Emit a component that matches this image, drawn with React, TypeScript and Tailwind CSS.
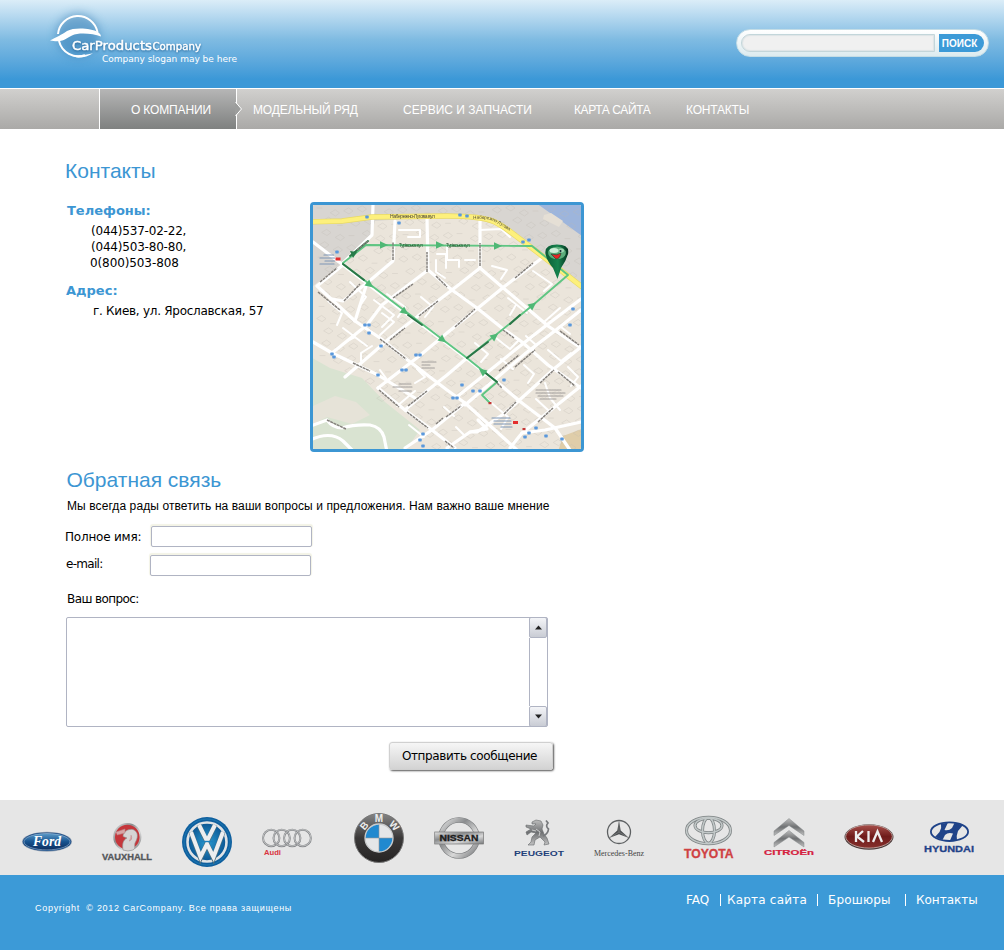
import React from "react";

const sans = "font-['Liberation_Sans',Arial,sans-serif]";
const wide = "font-['DejaVu_Sans',Verdana,sans-serif]";

function BrandMark() {
  return (
    <svg width="200" height="72" viewBox="44 4 200 72" className="ml-[44px] mt-1 overflow-visible">
      <defs>
        <filter id="soft" x="-50%" y="-50%" width="200%" height="200%">
          <feGaussianBlur stdDeviation="5" />
        </filter>
      </defs>
      <circle cx="78" cy="35" r="22" fill="#2d78b0" opacity=".5" filter="url(#soft)" />
      <path d="M58 34A20 20 0 0 1 97.500 32" fill="none" stroke="#fff" strokeWidth="2" />
      <path d="M59 41A20 20 0 0 0 85 55.200" fill="none" stroke="#fff" strokeWidth="2" />
      <path d="M76 55.200Q85 55.500 93 53.200Q86 58 76 57.300Z" fill="#fff" />
      <path d="M50 40.500C57 37 61 35 67 31C74 27 91 28 98 32C100 33.500 101 35 101 36.500C93 33.500 79 32 72 35.500C65 39 62 43 50 40.500Z" fill="#fff" />
      <g fontFamily="'DejaVu Sans', Verdana, sans-serif" fill="#fff">
        <g stroke="#fff" strokeWidth=".45" style={{ filter: "drop-shadow(0 1px 1px #2a6a9c)" }}>
          <text x="72" y="49.500" fontSize="12.500" textLength="80" lengthAdjust="spacingAndGlyphs">CarProducts</text>
          <text x="152.500" y="49.500" fontSize="11" textLength="48.500" lengthAdjust="spacingAndGlyphs">Company</text>
        </g>
        <text x="102" y="62" fontSize="9" textLength="135">Company slogan may be here</text>
      </g>
    </svg>
  );
}

function SearchBox() {
  return (
    <form className="mt-[29px] mr-[15px] flex h-[28px] w-[253px] gap-1 rounded-full border border-[#c4dde6] bg-gradient-to-b from-white to-[#dcebef] p-1" onSubmit={(e) => e.preventDefault()}>
      <input aria-label="ПОИСК" className="h-[18px] w-[195px] rounded-l-full border-[1.5px] border-[#c3d6da] bg-[#f0f0f0] px-2 text-xs shadow-[inset_0_0_1px_1px_#dde4e6] outline-none" />
      <button className={`${sans} h-[18px] w-[45px] rounded-r-full bg-[#3c9ad7] pr-[4px] text-center text-[10px] leading-[17px] font-bold text-white`}>ПОИСК</button>
    </form>
  );
}

function Nav() {
  return (
    <nav className={`${sans} flex h-[41px] border-t border-white bg-gradient-to-b from-[#d1d0ce] to-[#aaa9a7] text-[12px] leading-[42px] whitespace-nowrap text-white`}>
      <a className="relative ml-[99px] block h-10 w-[138px] border-x border-white bg-gradient-to-b from-[#b6b6b6] to-[#7f8180] pl-[31px] tracking-[-0.15px]">
        О КОМПАНИИ
        <svg width="8" height="14" viewBox="0 0 8 14" className="absolute top-[13px] -right-[7px]">
          <path d="M0 0L6.500 7L0 14Z" fill="#9c9d9c" />
          <path d="M.5 0L6.500 7L.5 14" fill="none" stroke="#fff" />
        </svg>
      </a>
      <a className="ml-[16px] w-[150px] tracking-[-0.15px]">МОДЕЛЬНЫЙ РЯД</a>
      <a className="w-[171px]">СЕРВИС И ЗАПЧАСТИ</a>
      <a className="w-[112px] tracking-[-0.4px]">КАРТА САЙТА</a>
      <a className="tracking-[-0.2px]">КОНТАКТЫ</a>
    </nav>
  );
}

const roads = [
  "M343 265L408 315L445 342L497 382L522 403L555 428L570 450",
  "M313 242L343 265L317 286L355 321L380 338L405 358L447 390L465 403L517 450",
  "M373 205L372 235L343 263",
  "M313 342L332 353L378 375L415 398",
  "M332 353L367 325L382 305L428 270",
  "M355 321L367 283L393 261L395 221",
  "M367 283L343 301L332 299",
  "M427 218L428 270L452 290L477 308L502 328L522 342L548 365L581 388",
  "M480 221L480 268L452 290L418 316L390 338L345 377",
  "M480 268L548 326L581 348",
  "M542 258L505 286L478 308L447 333L418 357L378 388",
  "M378 388L405 410L432 430L455 448",
  "M405 410L428 390L447 375L467 358",
  "M458 396L520 346L548 324L581 299",
  "M465 405L526 353L556 330L581 310",
  "M581 347L555 368L505 413L477 432L470 432",
  "M581 386L522 433L510 448",
  "M405 448L432 430L465 403",
  "M581 422L545 430L522 433",
  "M447 448L470 432L487 429L478 420",
];

const lanes = [
  "M399 230H420V237H408", "M447 246V260H459V267", "M465 260H475", "M480 230L501 229L510 237", "M492 266L507 270L501 279",
  "M374 300L394 315L382 327", "M387 294L405 307L398 317", "M328 301L342 313L337 325", "M352 335L367 346", "M343 328L355 337L347 341",
  "M361 361V353L372 346", "M508 298L527 313", "M516 305L510 315", "M533 271L552 284L544 291", "M544 322L560 308", "M421 297L433 307L425 317",
  "M436 260V272L445 278", "M437 254H446V268", "M496 338L510 349L518 341", "M475 343L488 354L481 362", "M548 350L561 361L571 353",
  "M524 365L534 374L528 383", "M545 383L550 398L560 410", "M482 395L508 417L501 429", "M415 383L425 377L417 369", "M380 370L388 381",
  "M433 332L443 340", "M397 406L415 391", "M501 359L513 369", "M561 327L570 334", "M526 336L536 345L532 351", "M568 367L578 377L571 386",
  "M380 335L394 322L382 313", "M350 282L366 297L359 307", "M536 399L548 410", "M456 427L465 436", "M444 407L454 416", "M409 425L424 437",
];

const streetNames = [
  "M357 250L368 241", "M320 282L337 268", "M318 292L340 310", "M344 301L360 284", "M393 260V242", "M427 272V252", "M480 266V243",
  "M393 298L413 284", "M436 276L447 287", "M419 316L438 301", "M515 278L533 263", "M455 327L475 309", "M380 339L406 359", "M390 340L405 328",
  "M353 363L370 371", "M379 390L399 407", "M408 406L427 391", "M407 412L428 428", "M327 420L346 429", "M499 371L519 355", "M515 367L535 350",
  "M503 330L514 338", "M560 331L579 345", "M540 383L554 370", "M558 372L575 386", "M504 414L516 402", "M538 422L553 408", "M446 417L461 406", "M436 424L443 418", "M445 441L454 448", "M497 383L502 388",
];

const stops = [
  [367, 217], [399, 223], [460, 215], [467, 216], [523, 242], [529, 240], [337, 252], [369, 333], [332, 354], [334, 357], [378, 375],
  [416, 355], [420, 355], [402, 370], [406, 370], [462, 385], [480, 391], [504, 380], [473, 391], [457, 398], [453, 398], [573, 309], [570, 325],
  [423, 434], [420, 440], [423, 446], [525, 437], [536, 428], [529, 433], [546, 436], [562, 439], [365, 325], [369, 325], [381, 346],
];

const arrows = [
  [384, 245, 0], [440, 245, 0], [498, 246, 0], [370, 285, 38], [405, 312, 38], [443, 340, 38], [482, 371, -142], [533, 305, -38], [495, 336, -38],
];

function LocationMap() {
  const blocks: React.ReactNode[] = [];
  for (let row = 0; row < 20; row++) {
    for (let col = 0; col < 20; col++) {
      const x = 317 + col * 13.5 + ((row * 7) % 9);
      const y = 208 + row * 12.3 + ((col * 5) % 7);
      const inPark = x < 420 && y > 352 + (x - 313) * 0.75;
      if (!inPark) blocks.push(<path key={`${row}-${col}`} d={(row * 3 + col) % 4 === 0 ? `M${x} ${y}h5` : `M${x} ${y}l5 3l4 -3l-4 -3z`} />);
    }
  }
  return (
    <div className="h-[250px] w-[274px] overflow-hidden rounded-[4px] border-[3px] border-[#3c96d3]">
      <svg width="268" height="244" viewBox="313 205 268 244">
        <defs>
          <filter id="mapSoft"><feGaussianBlur stdDeviation=".5" /></filter>
          <linearGradient id="pin" x1="0" x2="1"><stop stopColor="#0b5a35" /><stop offset=".55" stopColor="#16834e" /><stop offset="1" stopColor="#04331f" /></linearGradient>
        </defs>
        <g filter="url(#mapSoft)" fill="none" strokeLinejoin="round" strokeLinecap="round">
          <rect x="305" y="200" width="284" height="254" fill="#ebe5db" />
          <path d="M305 198H590V290L545 258L495 222L447 216L375 221L371 236L343 263L313 286H305Z" fill="#d8d5d1" />
          <path d="M529 198H590V242L560 220Z" fill="#9db5dc" />
          <path d="M305 354L330 368L362 378L385 402L420 430L402 455H305Z" fill="#d9e3d1" />
          <path d="M313 406L335 396L356 402L370 415L352 424L327 417L313 424Z" fill="#e6e3d8" />
          <path d="M563 436L590 426V455H557Z" fill="#dfcda9" />
          <g fill="none" stroke="#bdb8b0" strokeWidth=".7" opacity=".4">{blocks}</g>
          <path d="M544 215l7-2l12 8l-4 6l-16-8z" fill="#e5dfd5" />
          <g stroke="#fff" strokeWidth="2">{lanes.map((d, i) => <path key={i} d={d} />)}</g>
          <g stroke="#fff" strokeWidth="3.200">{roads.map((d, i) => <path key={i} d={d} />)}</g>
          <path d="M308 427L327 420Q333 428 342 428Q355 424 370 425Q381 427 384 437L387 452M308 441Q330 430 343 441L354 452" stroke="#fff" strokeWidth="3.200" />
          <path d="M305 222L342 221L372 217L447 216Q482 216 495 222Q503 226 512 233L545 258L590 293" stroke="#e9da64" strokeWidth="5.400" />
          <path d="M305 222L342 221L372 217L447 216Q482 216 495 222Q503 226 512 233L545 258L590 293" stroke="#fdf07c" strokeWidth="4.200" />
          <g stroke="#5ec582" strokeWidth="1.900">
            <path d="M343 263L366 245L532 246L568 275L533 305L467 358" />
            <path d="M343 264L467 358L497 382L482 395L490 403" />
          </g>
          <path d="M350 256L368 241M343 264L364 280M408 315L422 325M467 358L488 342M510 324L520 315M483 371L497 382" stroke="#2b7547" strokeWidth="1.900" />
          <path d="M350 251l7 1l-4 6z" fill="#267c48" />
          {arrows.map(([x, y, angle]) => <path key={`${x}-${y}`} d="M-4 -3.800L4 0L-4 3.800Z" fill="#4fb875" transform={`translate(${x} ${y}) rotate(${angle})`} />)}
          <path d={streetNames.join("")} stroke="#85817c" strokeWidth="1.500" strokeDasharray="3 .6" strokeLinecap="butt" />
          {stops.map(([x, y], i) => <rect key={i} x={x - 1.7} y={y - 1.4} width="3.400" height="2.800" rx=".6" fill="#5a98dc" />)}
          {[[338, 259], [515.500, 422.500]].map(([x, y]) => <rect key={x} x={x - 2.500} y={y - 1.500} width="5" height="3" fill="#e32d2d" />)}
          {[[490, 403], [524, 429]].map(([x, y]) => <rect key={x} x={x - 1.500} y={y - 1} width="3" height="2.200" fill="#c43836" />)}
          <g fontFamily="'Liberation Sans', Arial, sans-serif" fontSize="5" fill="#4b4638">
            <path id="embankment" fill="none" d="M473 219Q488 218 495 222Q503 226 514 234" />
            <text x="390" y="218" textLength="45">Набережно-Лугова вул</text>
            <text fontSize="4.500"><textPath href="#embankment">Набережно-Лугова</textPath></text>
            <text x="399" y="247" fontSize="4.500" textLength="24" fill="#24532d">Турівська вул</text>
            <text x="446" y="247" fontSize="4.500" textLength="24" fill="#24532d">Турівська вул</text>
          </g>
          <path d="M324 255H334M320 258H335M325 261H335M320 264H334M492 418H510M494 421H511M494 424H511M501 427H512" stroke="#7d95b5" strokeWidth="1.200" strokeDasharray="2 .5" />
          <path d="M422 362H436M422 365H430M422 368H435M399 384H411M393 387H412M399 391H412M536 390H561M536 393H565M538 396H563M540 399H556" stroke="#a19e9b" strokeWidth="1.100" strokeDasharray="2 .6" />
        </g>
        <path d="M545.500 254Q544 244.500 557 244.500Q570 244.500 568 254Q566 261 561 268L557.500 279L553 268Q547 261 545.500 254Z" fill="url(#pin)" />
        <ellipse cx="557" cy="253" rx="8.800" ry="6.200" fill="#5cad7b" />
        <ellipse cx="554" cy="250.500" rx="4.500" ry="2.500" fill="#cdeed8" />
        <ellipse cx="561" cy="250.500" rx="3" ry="2" fill="#9fd6b2" />
        <circle cx="560.500" cy="251" r="1" fill="#123" />
        <path d="M551 254Q557 256 561 253Q560 259 556 259Z" fill="#e52625" stroke="#143" strokeWidth=".6" />
      </svg>
    </div>
  );
}

function ContactBlock() {
  return (
    <section className="mt-[21px] flex h-[250px]">
      <div className={`${wide} w-[245px] text-[12px] leading-4 whitespace-nowrap text-black`}>
        <h3 className="pl-[2px] text-[13px] leading-[17px] font-bold text-[#3c96d3]">Телефоны:</h3>
        <div className="mt-1 pl-[26px] tracking-[-0.2px]">
          <p>(044)537-02-22,</p>
          <p>(044)503-80-80,</p>
          <p className="-ml-px tracking-[-0.1px]">0(800)503-808</p>
        </div>
        <h3 className="mt-[11px] pl-[1px] text-[13px] leading-[17px] font-bold text-[#3c96d3]">Адрес:</h3>
        <p className="mt-1 pl-[28px] tracking-[-0.27px]">г. Киев, ул. Ярославская, 57</p>
      </div>
      <LocationMap />
    </section>
  );
}

function ScrollButton({ down = false }: { down?: boolean }) {
  return (
    <button type="button" aria-label={down ? "▼" : "▲"} className="flex h-[21px] w-[18px] items-center justify-center rounded-[2px] border border-[#b0b4c3] bg-gradient-to-b from-[#f4f5f8] to-[#c9ccd4]">
      <svg width="7" height="5" viewBox="0 0 7 5"><path d={down ? "M0 .5H7L3.500 4.500Z" : "M0 4.500H7L3.500 .5Z"} fill="#222" /></svg>
    </button>
  );
}

const field = "h-[21px] w-[161px] rounded-[2px] border border-[#b0b4c3] bg-white px-1 text-xs shadow-[0_-1px_1px_1px_#f3f3e6] outline-none";

function FeedbackForm() {
  return (
    <form className={`${wide} text-[12px] whitespace-nowrap text-black`} onSubmit={(e) => e.preventDefault()}>
      <h2 className={`${sans} mt-[18px] pl-[1.5px] text-[21px] leading-5 text-[#3c96d3]`}>Обратная связь</h2>
      <p className={`${sans} mt-2 pl-[2px] text-[12px] leading-4 tracking-[0.09px]`}>Мы всегда рады ответить на ваши вопросы и предложения. Нам важно ваше мнение</p>
      <label className="mt-[12px] flex h-[21px] leading-[22px]">
        <span className="w-[86px] tracking-[-0.2px]">Полное имя:</span>
        <input className={field} />
      </label>
      <label className="mt-[8px] flex h-[21px] leading-[18px]">
        <span className="w-[85px] pl-px tracking-[-0.7px]">e-mail:</span>
        <input className={field} />
      </label>
      <p className="mt-[15px] pl-[2px] leading-4 tracking-[-0.6px]">Ваш вопрос:</p>
      <div className="mt-[10px] ml-px flex h-[110px] w-[482px] rounded-[2px] border border-[#b0b4c3] bg-white">
        <textarea aria-label="Ваш вопрос:" className="h-[108px] flex-1 resize-none overflow-hidden p-1 outline-none" />
        <div className="-my-px -mr-px flex h-[110px] w-[19px] flex-col justify-between">
          <ScrollButton />
          <div className="w-[19px] flex-1 border-x border-[#b0b4c3]" />
          <ScrollButton down />
        </div>
      </div>
      <button className="mt-[15px] ml-[324px] h-[28px] w-[164px] rounded-[3px] border border-[#d0d0d0] bg-gradient-to-b from-[#f6f6f6] to-[#d3d3d3] pr-[3px] text-center leading-[26px] tracking-[-0.38px] shadow-[1px_1px_2px_#555]">Отправить сообщение</button>
    </form>
  );
}

function Logo({ children }: { children: React.ReactNode }) {
  return (
    <svg width="50" height="75" viewBox="0 0 50 75" className="overflow-visible" fontFamily="'Liberation Sans', Arial, sans-serif">
      {children}
    </svg>
  );
}

function BrandStrip() {
  return (
    <section className="flex h-[75px] bg-[#e6e6e6] pl-[22px]">
      <svg width="0" height="0" className="absolute">
        <defs>
          <linearGradient id="steel" x1="0" y1="0" x2="1" y2="1"><stop stopColor="#e4e4e4" /><stop offset=".35" stopColor="#8a8c8e" /><stop offset=".65" stopColor="#d8d8d8" /><stop offset="1" stopColor="#77797b" /></linearGradient>
          <linearGradient id="steelDown" x2="0" y2="1"><stop stopColor="#bdbdbd" /><stop offset=".5" stopColor="#6f7173" /><stop offset="1" stopColor="#c2c2c2" /></linearGradient>
          <linearGradient id="fordBlue" x2="0" y2="1"><stop stopColor="#5b9bc9" /><stop offset=".5" stopColor="#17538f" /><stop offset="1" stopColor="#0c2d5e" /></linearGradient>
          <radialGradient id="vwBlue"><stop stopColor="#2a9ad0" /><stop offset="1" stopColor="#0b5592" /></radialGradient>
          <linearGradient id="bmwBlack" x2="0" y2="1"><stop stopColor="#858585" /><stop offset=".5" stopColor="#3a3838" /><stop offset="1" stopColor="#262424" /></linearGradient>
          <linearGradient id="kiaRed" x2="0" y2="1"><stop stopColor="#a8504b" /><stop offset=".5" stopColor="#6f1b1a" /><stop offset="1" stopColor="#86302c" /></linearGradient>
        </defs>
      </svg>
      <div className="flex gap-[30px]">
        <Logo>
          <ellipse cx="25" cy="41.700" rx="25" ry="10" fill="#9aa6b5" />
          <ellipse cx="25" cy="41.700" rx="24.300" ry="9.300" fill="#174b86" />
          <ellipse cx="25" cy="41.700" rx="23" ry="8.200" fill="url(#fordBlue)" stroke="#b9cfe2" strokeWidth=".5" />
          <text x="11" y="46.300" fontSize="14" fontStyle="italic" fontWeight="bold" fontFamily="'Liberation Serif', 'Times New Roman', serif" fill="#fff" textLength="28" lengthAdjust="spacingAndGlyphs">Ford</text>
        </Logo>
        <Logo>
          <circle cx="25.300" cy="37" r="13.200" fill="#c5363b" stroke="url(#steel)" strokeWidth="1.800" />
          <path d="M21 50C20 44 21 40 25 38L21 36.500C21 32 26 28.500 31 29.500C37 32 36 38 33 43C32 47 34 48 31 50Q26 52 21 50Z" fill="#d6d4d4" stroke="#8f8d8d" strokeWidth=".6" />
          <path d="M14 32L23 29L23 33L15 35M27 41q4-1 2-6" fill="#d9a5a6" stroke="#b98385" strokeWidth=".6" />
          <text x="0" y="60.300" fontSize="8.500" fontWeight="bold" fill="#54575b" stroke="#54575b" strokeWidth=".3" textLength="50" lengthAdjust="spacingAndGlyphs">VAUXHALL</text>
        </Logo>
        <Logo>
          <circle cx="25" cy="42" r="25" fill="#0f5f9e" />
          <circle cx="25" cy="42" r="23" fill="none" stroke="#1d78b2" />
          <circle cx="25" cy="42" r="19.500" fill="url(#vwBlue)" stroke="#dfe3e6" strokeWidth="2.600" />
          <path d="M17 25L25 42L33 25M9 32L18.500 58L25 44L31.500 58L41 32" fill="none" stroke="#50707f" strokeWidth="5" />
          <path d="M17 25L25 41L33 25M9 32L18.500 57L25 44L31.500 57L41 32" fill="none" stroke="#eceef0" strokeWidth="4" />
          <path d="M19 41.500H31" stroke="#1c80bd" strokeWidth="1.400" />
        </Logo>
        <Logo>
          {[9.2, 19.7, 30.2, 40.700].map((x) => (
            <g key={x} fill="none"><circle cx={x} cy="38" r="8.200" stroke="#85878a" strokeWidth="2" /><circle cx={x} cy="37.800" r="8.200" stroke="#d7d8d9" strokeWidth=".7" /></g>
          ))}
          <text x="2" y="55" fontSize="6.500" fontWeight="bold" fill="#d9343f" textLength="17" lengthAdjust="spacingAndGlyphs">Audi</text>
        </Logo>
      </div>
      <div className="ml-[42px] flex gap-[30px]">
        <Logo>
          <circle cx="25" cy="38" r="24.500" fill="url(#bmwBlack)" stroke="#777" />
          <circle cx="25" cy="38" r="14" fill="#e4e6e8" stroke="#c9cbcc" strokeWidth="1.300" />
          <path d="M25 38V24.700A13.300 13.300 0 0 0 11.700 38ZM25 38V51.300A13.300 13.300 0 0 0 38.300 38Z" fill="#2189cf" />
          <path d="M25 24.500V51.500M11.500 38H38.500" stroke="#999" strokeWidth=".6" />
          <g fill="#eee" fontSize="10" fontWeight="bold" textAnchor="middle">
            <text x="10.500" y="29" transform="rotate(-50 10.500 26)">B</text>
            <text x="25" y="22">M</text>
            <text x="40" y="29" transform="rotate(48 40 26)">W</text>
          </g>
        </Logo>
        <Logo>
          <circle cx="25" cy="38" r="18" fill="none" stroke="#7b7d7f" strokeWidth="5.500" />
          <circle cx="25" cy="38" r="18" fill="none" stroke="url(#steel)" strokeWidth="4.300" />
          <rect x=".7" y="32" width="48.800" height="12" fill="url(#steel)" stroke="#777" strokeWidth=".7" />
          <text x="5.500" y="41" fontSize="8.500" fontWeight="bold" fill="#1d1d1d" stroke="#1d1d1d" strokeWidth=".3" textLength="39" lengthAdjust="spacingAndGlyphs">NISSAN</text>
        </Logo>
        <Logo>
          <g fill="url(#steelDown)" stroke="#67696c" strokeWidth=".6" strokeLinejoin="round">
            <path d="M18 22L22 20L27 21L29 25L28 29L30 34L33 38L35 44L30 45L31 42L26 37L21 40L20 45L14 45L17 42L18 37L22 33L17 32L13 35L12 32L17 29L12 27L12 25L20 26L22 24L18 24Z" />
          </g>
          <path d="M29 36Q34 34 34.500 29Q31 26 34 23L32 20.500" stroke="#77797c" strokeWidth="1.700" fill="none" />
          <path d="M22 29L26 32L25 36M18 30L22 31" stroke="#ddd" strokeWidth=".8" fill="none" />
          <text x="0" y="56" fontSize="6.700" fontWeight="bold" fill="#223f79" textLength="50" lengthAdjust="spacingAndGlyphs">PEUGEOT</text>
        </Logo>
        <Logo>
          <circle cx="25" cy="32" r="11.500" fill="none" stroke="#5d6062" strokeWidth="1.300" />
          <path d="M25 20.500L26.700 30.500L35 38L25 34.300L15 38L23.300 30.500Z" fill="#4d5052" />
          <path d="M25 22V32L34 37.500M25 32L16 37.500" stroke="#aaa" strokeWidth=".4" fill="none" />
          <text x="0" y="55.700" fontSize="7.800" fontFamily="'Liberation Serif', 'Times New Roman', serif" fill="#444" textLength="50" lengthAdjust="spacingAndGlyphs">Mercedes-Benz</text>
        </Logo>
      </div>
      <div className="ml-[40px] flex gap-[30px]">
        <Logo>
          <g fill="none">
            <g stroke="#7c8283" strokeWidth="3"><ellipse cx="24.500" cy="30.500" rx="22" ry="13.300" /><ellipse cx="24.500" cy="25.500" rx="13.500" ry="7.300" /><ellipse cx="24.500" cy="30.500" rx="6" ry="12.700" /></g>
            <g stroke="#c2c8c8" strokeWidth="1.600"><ellipse cx="24.500" cy="30.500" rx="22" ry="13.300" /><ellipse cx="24.500" cy="25.500" rx="13.500" ry="7.300" /><ellipse cx="24.500" cy="30.500" rx="6" ry="12.700" /></g>
          </g>
          <text x="0" y="57.500" fontSize="12" fontWeight="bold" fill="#cf4142" stroke="#cf4142" strokeWidth=".3" textLength="49.500" lengthAdjust="spacingAndGlyphs">TOYOTA</text>
        </Logo>
        <Logo>
          <g fill="url(#steelDown)" stroke="#85888a" strokeWidth=".5">
            <path d="M25 18.500L40 31V35.500L25 25.500L10 35.500V31Z" />
            <path d="M25 30.500L40 42.500V47L25 37L10 47V42.500Z" />
          </g>
          <text x="0" y="54.700" fontSize="7" fontWeight="bold" fill="#d5213f" stroke="#d5213f" strokeWidth=".2" textLength="50" lengthAdjust="spacingAndGlyphs">CITROËn</text>
        </Logo>
        <Logo>
          <ellipse cx="25" cy="37" rx="24.500" ry="12.700" fill="#4b3a39" />
          <ellipse cx="25" cy="36.500" rx="23.300" ry="11.600" fill="url(#kiaRed)" stroke="#cbb5b1" strokeWidth=".8" />
          <path d="M12 31V42M19 31L13 36.500L20 42M24.500 31V42M29 42L33.500 31.500L38 42" fill="none" stroke="#eee" strokeWidth="2.300" />
        </Logo>
        <Logo>
          <ellipse cx="25.500" cy="31.700" rx="18.600" ry="9.300" fill="none" stroke="#1f4389" strokeWidth="1.800" />
          <path d="M17 24L24 22.500L20.500 30Q25 31 28 28L30.500 23L39 25L34 31Q32 36 33 40L26 40.500L29 33.500Q24 32 21 35L18.500 40L11 37L15.500 32Q18 28 17 24Z" fill="#1f4389" />
          <text x="0" y="51.800" fontSize="9" fontWeight="bold" fill="#1f4389" stroke="#1f4389" strokeWidth=".3" textLength="50" lengthAdjust="spacingAndGlyphs">HYUNDAI</text>
        </Logo>
      </div>
    </section>
  );
}

function Footer() {
  return (
    <footer className="flex h-[75px] bg-[#3c9ad7] whitespace-nowrap text-white">
      <p className={`${sans} ml-[35px] w-[651px] pt-[25px] text-[9px] leading-4 tracking-[0.71px]`}>Copyright&nbsp; © 2012 CarCompany. Все права защищены</p>
      <div className={`${wide} flex pt-[17px] text-[12px] leading-4`}>
        <a className="w-[34px]">FAQ</a>
        <span className="mt-[2px] mr-[6px] h-[12px] w-px bg-white" />
        <a className="w-[90px] tracking-[0.2px]">Карта сайта</a>
        <span className="mt-[2px] mr-[10px] h-[12px] w-px bg-white" />
        <a className="w-[77px] tracking-[0.2px]">Брошюры</a>
        <span className="mt-[2px] mr-[10px] h-[12px] w-px bg-white" />
        <a>Контакты</a>
      </div>
    </footer>
  );
}

export default function App() {
  return (
    <div className="h-[950px] w-[1004px] overflow-hidden bg-white">
      <header className="flex h-[88px] justify-between bg-gradient-to-b from-[#dbedf8] via-[#7fbbe2] via-45% to-[#3b98d7] to-90%">
        <BrandMark />
        <SearchBox />
      </header>
      <Nav />
      <main className="h-[671px] pt-[32px] pl-[65px]">
        <h1 className={`${sans} text-[21px] leading-5 text-[#3c96d3]`}>Контакты</h1>
        <ContactBlock />
        <FeedbackForm />
      </main>
      <BrandStrip />
      <Footer />
    </div>
  );
}
